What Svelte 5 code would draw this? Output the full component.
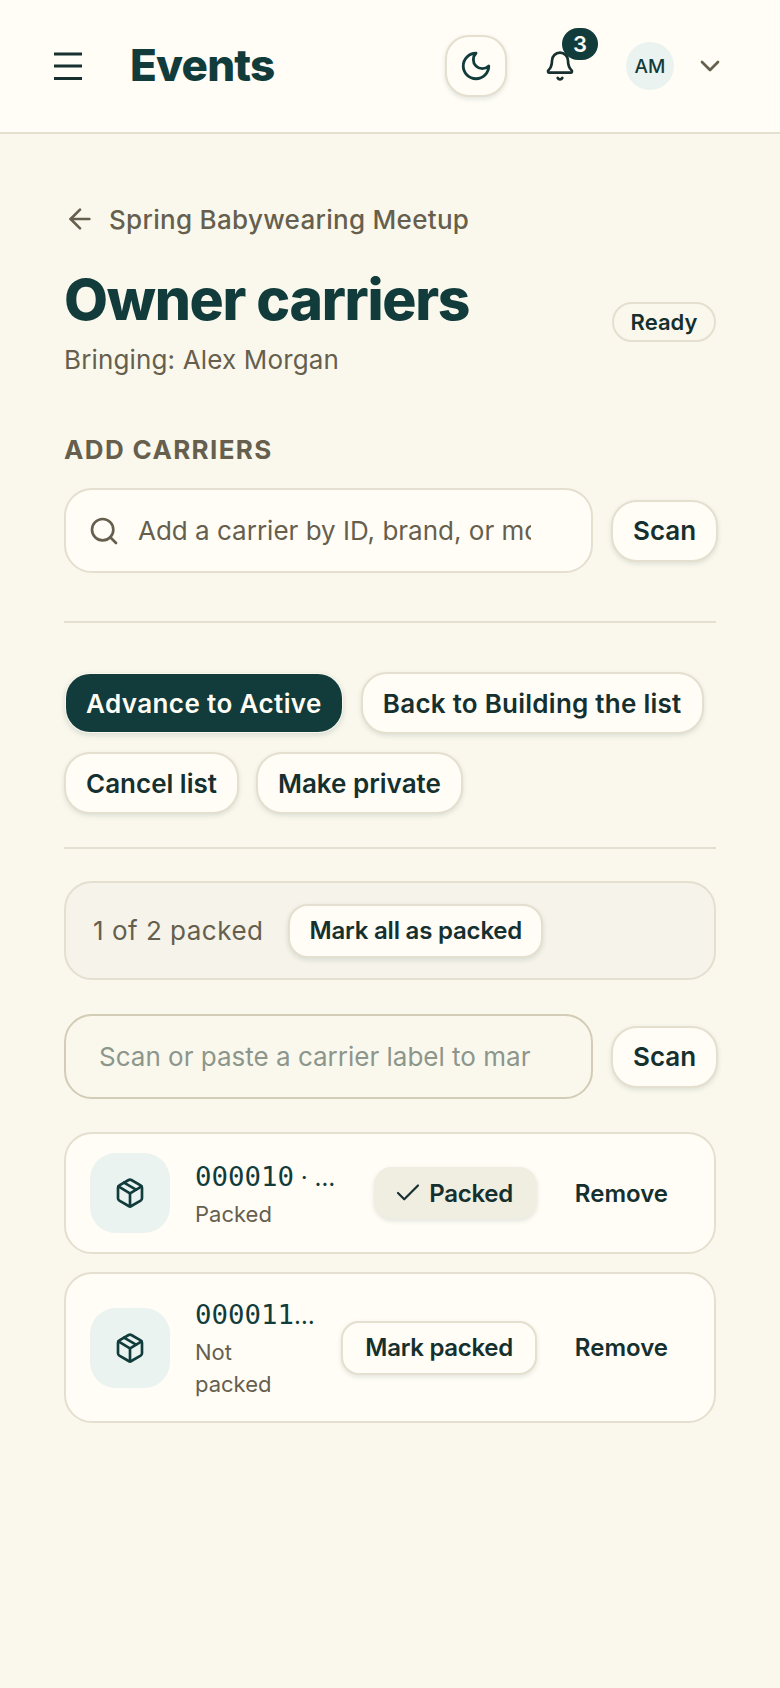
<script>
  const items = [
    { id: '000010', brand: 'Wrapsody', status: 'Packed', packed: true },
    { id: '000011', brand: 'Ergobaby', status: 'Not packed', packed: false }
  ];
</script>

<div class="page">
  <header class="top">
    <button class="menu" aria-label="Menu">
      <svg viewBox="0 0 30 28" width="30" height="28"><path d="M1 2h28M1 14h28M1 26.500h28" /></svg>
    </button>
    <span class="brand">Events</span>
    <button class="theme" aria-label="Theme">
      <svg viewBox="0 0 24 24" width="34" height="34"><path d="M12 3a6 6 0 0 0 9 9 9 9 0 1 1-9-9Z" /></svg>
    </button>
    <div class="bell">
      <svg viewBox="0 0 24 24" width="32" height="32"><path d="M10.268 21a2 2 0 0 0 3.464 0" /><path d="M3.262 15.326A1 1 0 0 0 4 17h16a1 1 0 0 0 .74-1.673C19.41 13.956 18 12.499 18 8A6 6 0 0 0 6 8c0 4.499-1.411 5.956-2.738 7.326" /></svg>
      <span class="badge">3</span>
    </div>
    <span class="avatar">AM</span>
    <svg class="chev" viewBox="0 0 24 24" width="32" height="32"><path d="m6 9 6 6 6-6" /></svg>
  </header>

  <main>
    <div class="back">
      <svg viewBox="0 0 24 24" width="32" height="32"><path d="m12 19-7-7 7-7" /><path d="M19 12H5" /></svg>
      <span>Spring Babywearing Meetup</span>
    </div>
    <div class="heading">
      <div>
        <h1>Owner carriers</h1>
        <p class="sub">Bringing: Alex Morgan</p>
      </div>
      <span class="ready">Ready</span>
    </div>

    <h2>ADD CARRIERS</h2>
    <div class="row">
      <label class="field search">
        <svg viewBox="0 0 24 24" width="32" height="32"><circle cx="11" cy="11" r="8" /><path d="m21 21-4.3-4.3" /></svg>
        <input placeholder="Add a carrier by ID, brand, or model" />
      </label>
      <button class="btn">Scan</button>
    </div>

    <hr class="d1" />

    <div class="actions">
      <button class="btn primary">Advance to Active</button>
      <button class="btn wide">Back to Building the list</button>
      <button class="btn">Cancel list</button>
      <button class="btn">Make private</button>
    </div>

    <hr class="d2" />

    <div class="progress">
      <span>1 of 2 packed</span>
      <button class="btn small">Mark all as packed</button>
    </div>

    <div class="row second">
      <label class="field scan">
        <input placeholder="Scan or paste a carrier label to mark it packed" />
      </label>
      <button class="btn">Scan</button>
    </div>

    <ul>
      {#each items as item}
        <li class:tall={!item.packed}>
          <span class="tile">
            <svg viewBox="0 0 24 24" width="32" height="32"><path d="M11 21.73a2 2 0 0 0 2 0l7-4A2 2 0 0 0 21 16V8a2 2 0 0 0-1-1.73l-7-4a2 2 0 0 0-2 0l-7 4A2 2 0 0 0 3 8v8a2 2 0 0 0 1 1.73z" /><path d="M12 22V12" /><path d="m3.3 7 7.703 4.734a2 2 0 0 0 1.994 0L20.7 7" /><path d="m7.5 4.27 9 5.15" /></svg>
          </span>
          <div class="info">
            <div class="id"><span class="code">{item.id}</span> · {item.brand}</div>
            <div class="status">{item.status}</div>
          </div>
          {#if item.packed}
            <button class="mark done">
              <svg viewBox="0 0 24 24" width="30" height="30"><path d="M20 6 9 17l-5-5" /></svg>
              Packed
            </button>
          {:else}
            <button class="mark">Mark packed</button>
          {/if}
          <button class="remove">Remove</button>
        </li>
      {/each}
    </ul>
  </main>
</div>

<style>
  :global(body) {
    margin: 0;
    background: #faf8ec;
  }
  .page {
    min-height: 1688px;
    background: #faf8ec;
    color: #113c3b;
    font-family: "Inter", "Liberation Sans", sans-serif;
  }
  svg {
    fill: none;
    stroke: currentColor;
    stroke-width: 2;
    stroke-linecap: round;
    stroke-linejoin: round;
    flex: none;
    display: block;
  }
  button {
    font-family: inherit;
    color: #15302e;
    cursor: pointer;
  }
  .top {
    height: 132px;
    display: flex;
    align-items: center;
    background: #fffdf6;
    border-bottom: 2px solid #e4dfcf;
  }
  .menu {
    background: none;
    border: 0;
    padding: 0;
    margin-left: 53px;
  }
  .menu svg {
    stroke-width: 3;
    stroke-linecap: butt;
  }
  .brand {
    margin-left: 47px;
    margin-bottom: 3px;
    font-size: 44px;
    font-weight: 800;
    letter-spacing: -0.8px;
  }
  .theme {
    margin-left: auto;
    width: 62px;
    height: 62px;
    border-radius: 24px;
    background: #fffdf6;
    border: 2px solid #e4dfcf;
    box-shadow: 0 2px 5px rgba(17, 60, 59, .12);
    display: flex;
    align-items: center;
    justify-content: center;
    padding: 0;
    color: #113c3b;
  }
  .bell {
    position: relative;
    margin-left: 37px;
    width: 32px;
    height: 32px;
    color: #15302e;
  }
  .badge {
    position: absolute;
    left: 18px;
    top: -22px;
    width: 36px;
    height: 32px;
    border-radius: 16px;
    background: #113c3b;
    color: #fffdf6;
    font-size: 22px;
    font-weight: 600;
    display: flex;
    align-items: center;
    justify-content: center;
  }
  .avatar {
    margin-left: 50px;
    width: 48px;
    height: 48px;
    border-radius: 50%;
    background: #eaf3f0;
    display: flex;
    align-items: center;
    justify-content: center;
    font-size: 19px;
    font-weight: 500;
  }
  .chev {
    margin-left: 20px;
    margin-right: 54px;
    color: #665f4e;
  }
  main {
    padding: 0 64px;
  }
  .back {
    display: flex;
    align-items: center;
    gap: 13px;
    margin-top: 66px;
    height: 38px;
    color: #665f4e;
    font-size: 26px;
    font-weight: 500;
    letter-spacing: .3px;
  }
  .heading {
    display: flex;
    justify-content: space-between;
    align-items: center;
    margin-top: 26px;
  }
  h1 {
    margin: 0;
    font-size: 57px;
    line-height: 72px;
    font-weight: 800;
    letter-spacing: -1.3px;
  }
  .sub {
    margin: 5px 0 0;
    font-size: 26px;
    line-height: 38px;
    color: #665f4e;
    letter-spacing: .15px;
  }
  .ready {
    height: 36px;
    width: 100px;
    display: flex;
    align-items: center;
    justify-content: center;
    border-radius: 20px;
    border: 2px solid #e4dfcf;
    font-size: 22px;
    font-weight: 600;
    color: #15302e;
  }
  h2 {
    margin: 53px 0 0;
    font-size: 26px;
    line-height: 36px;
    font-weight: 700;
    color: #665f4e;
    letter-spacing: 1.35px;
  }
  .row {
    display: flex;
    align-items: center;
    gap: 18px;
    margin-top: 20px;
  }
  .field {
    flex: none;
    width: 529px;
    box-sizing: border-box;
    display: flex;
    align-items: center;
    border-radius: 28px;
  }
  input {
    flex: 1;
    min-width: 0;
    border: 0;
    outline: 0;
    padding: 0;
    background: none;
    font-family: inherit;
    font-size: 26px;
    color: inherit;
  }
  .search {
    height: 85px;
    padding: 0 60px 0 22px;
    gap: 18px;
    background: #fffdf6;
    border: 2px solid #e4dfcf;
    color: #665f4e;
  }
  .search input::placeholder {
    color: #665f4e;
    opacity: 1;
  }
  .scan {
    height: 85px;
    padding: 0 60px 0 33px;
    border: 2px solid #d3ccb6;
  }
  .scan input::placeholder {
    color: #8c968d;
    opacity: 1;
  }
  .btn {
    height: 62px;
    padding: 0 20px;
    border-radius: 26px;
    background: #fffdf6;
    border: 2px solid #e4dfcf;
    box-shadow: 0 2px 5px rgba(17, 60, 59, .12);
    font-size: 26px;
    font-weight: 600;
    white-space: nowrap;
  }
  .primary {
    background: #113c3b;
    background-clip: padding-box;
    border-color: transparent;
    color: #fffdf6;
    letter-spacing: .4px;
  }
  .wide {
    letter-spacing: .25px;
  }
  hr {
    border: 0;
    height: 2px;
    background: #e4dfcf;
    margin: 0;
  }
  .d1 {
    margin-top: 48px;
  }
  .actions {
    display: flex;
    flex-wrap: wrap;
    gap: 18px 17px;
    margin-top: 49px;
  }
  .d2 {
    margin-top: 33px;
  }
  .progress {
    display: flex;
    align-items: center;
    gap: 25px;
    height: 99px;
    box-sizing: border-box;
    margin-top: 32px;
    padding: 0 27px;
    border-radius: 28px;
    background: #f5f3ea;
    border: 2px solid #e4dfcf;
    color: #665f4e;
    font-size: 26px;
    letter-spacing: .5px;
  }
  .small {
    height: 54px;
    border-radius: 20px;
    padding: 0 19px;
    font-size: 24px;
    letter-spacing: -.2px;
  }
  .second {
    margin-top: 34px;
  }
  ul {
    list-style: none;
    margin: 33px 0 0;
    padding: 0;
    display: flex;
    flex-direction: column;
    gap: 18px;
  }
  li {
    display: flex;
    align-items: center;
    padding: 19px 46px 19px 24px;
    background: #fffdf6;
    border: 2px solid #e4dfcf;
    border-radius: 28px;
  }
  .tile {
    flex: none;
    width: 80px;
    height: 80px;
    border-radius: 26px;
    background: #eaf3f0;
    color: #113c3b;
    display: flex;
    align-items: center;
    justify-content: center;
  }
  .info {
    flex: 1;
    min-width: 0;
    margin-left: 25px;
    margin-right: 24px;
    padding-bottom: 2px;
  }
  .id {
    font-size: 24px;
    line-height: 44px;
    white-space: nowrap;
    overflow: hidden;
    text-overflow: ellipsis;
  }
  .code {
    font-family: "DejaVu Sans Mono", monospace;
    font-size: 27.4px;
  }
  .status {
    margin-top: -2px;
    font-size: 22px;
    line-height: 32px;
    color: #665f4e;
  }
  .tall .status {
    width: min-content;
  }
  .mark {
    flex: none;
    height: 54px;
    box-sizing: border-box;
    padding: 0 22px;
    display: flex;
    align-items: center;
    gap: 6px;
    background: #fffdf6;
    border: 2px solid #e4dfcf;
    border-radius: 18px;
    box-shadow: 0 2px 5px rgba(17, 60, 59, .12);
    font-size: 24px;
    font-weight: 600;
    letter-spacing: -.3px;
    white-space: nowrap;
  }
  .mark svg {
    stroke-width: 1.7;
  }
  .done {
    height: 52px;
    padding: 0 22px 0 17px;
    background: #f0ede1;
    border-color: #f0ede1;
  }
  .remove {
    flex: none;
    margin-left: 38px;
    background: none;
    border: 0;
    padding: 0;
    font-size: 24px;
    font-weight: 600;
  }
</style>
